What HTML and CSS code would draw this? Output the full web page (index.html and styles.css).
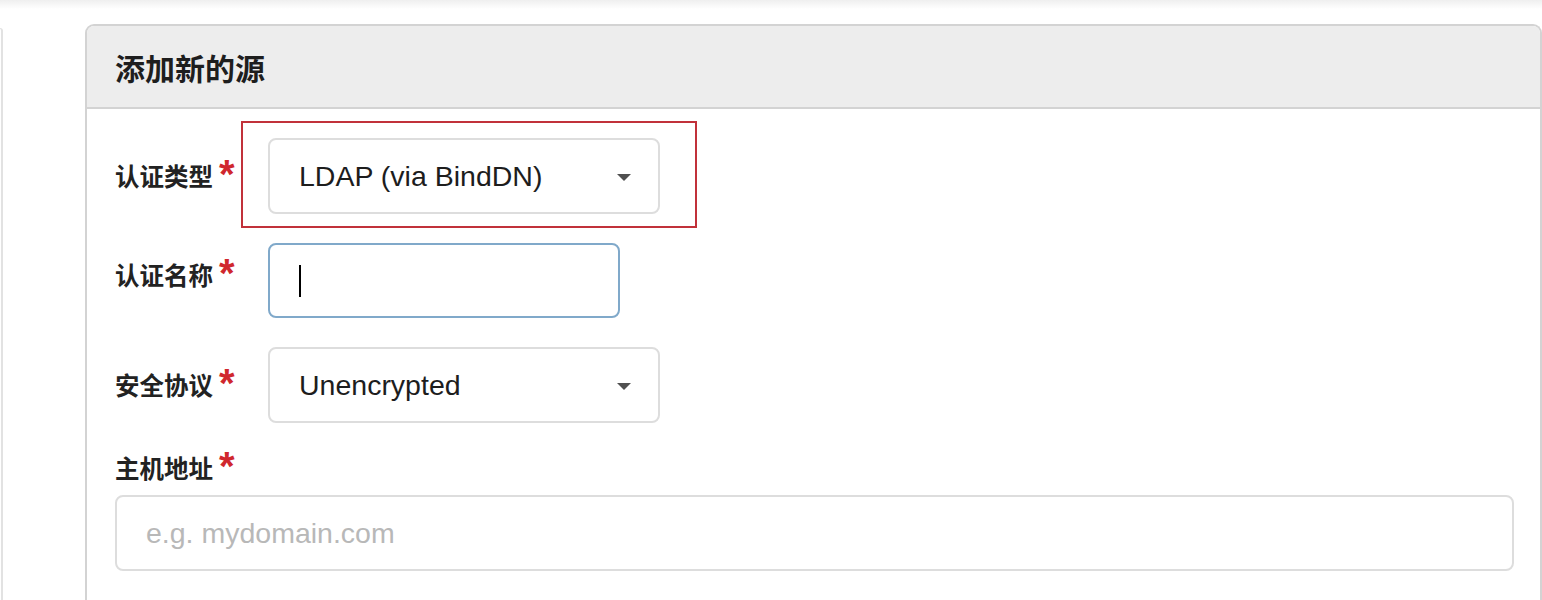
FILE: index.html
```html
<!DOCTYPE html>
<html lang="zh-CN">
<head>
<meta charset="utf-8">
<title>添加新的源</title>
<link rel="stylesheet" href="styles.css">
</head>
<body>
<div class="topshade"></div>
<div class="page">
  <div class="sidestub"></div>
  <section class="panel">
    <header class="panel-head">
      <h2 class="panel-title">添加新的源</h2>
    </header>
    <div class="panel-body">
      <div class="row">
        <label class="label">认证类型<span class="req">*</span></label>
        <div class="field select highlight">
          <span class="value">LDAP (via BindDN)</span>
          <span class="caret"></span>
        </div>
      </div>
      <div class="row">
        <label class="label label-up">认证名称<span class="req">*</span></label>
        <div class="field input focused">
          <span class="cursor"></span>
        </div>
      </div>
      <div class="row">
        <label class="label">安全协议<span class="req">*</span></label>
        <div class="field select">
          <span class="value">Unencrypted</span>
          <span class="caret"></span>
        </div>
      </div>
      <div class="stack">
        <label class="label">主机地址<span class="req">*</span></label>
        <div class="field input wide">
          <span class="placeholder">e.g. mydomain.com</span>
        </div>
      </div>
    </div>
  </section>
</div>
</body>
</html>
```

FILE: styles.css
```css
html, body {
  margin: 0;
  padding: 0;
  background: #ffffff;
  overflow: hidden;
}
body {
  width: 1542px;
  height: 600px;
  font-family: "Liberation Sans", "Noto Sans CJK SC", sans-serif;
  color: #222;
}
.topshade {
  height: 9px;
  background: linear-gradient(#efefef, #ffffff);
}
.page {
  display: flex;
  align-items: flex-start;
}
.sidestub {
  width: 1px;
  height: 600px;
  margin-top: 19px;
  border-top: 1px solid #e2e2e2;
  border-right: 2px solid #e2e2e2;
  border-top-right-radius: 6px;
  flex: none;
}
.panel {
  flex: 1;
  margin-left: 82px;
  margin-top: 15px;
  border: 2px solid #d3d3d3;
  border-bottom: none;
  border-radius: 9px 9px 0 0;
  height: 600px;
  background: #fff;
}
.panel-head {
  height: 81px;
  background: #ededed;
  border-bottom: 2px solid #d3d3d3;
  border-radius: 7px 7px 0 0;
  display: flex;
  align-items: center;
  padding-left: 28px;
}
.panel-title {
  margin: 0;
  font-family: "Noto Sans CJK SC", sans-serif;
  font-size: 30px;
  font-weight: 700;
  color: #1e1e1e;
}
.panel-body {
  padding: 0 26px 0 28px;
}
.row {
  display: flex;
  align-items: center;
  margin-top: 29px;
}
.row .label {
  width: 153px;
  flex: none;
}
.label {
  font-family: "Noto Sans CJK SC", sans-serif;
  font-size: 24.5px;
  font-weight: 700;
  line-height: 34px;
  color: #222;
  display: block;
}
.label-up {
  margin-bottom: 11px;
}
.req {
  font-family: "Liberation Sans", sans-serif;
  color: #d0272e;
  font-size: 40px;
  font-weight: 700;
  line-height: 0;
  margin-left: 6px;
  position: relative;
  top: 2px;
}
.field {
  box-sizing: border-box;
  height: 76px;
  border: 2px solid #dddddd;
  border-radius: 8px;
  background: #fff;
  display: flex;
  align-items: center;
  padding-left: 29px;
  position: relative;
}
.select {
  width: 392px;
}
.input {
  width: 352px;
}
.focused {
  border-color: #80a9ca;
  height: 75px;
}
.wide {
  width: auto;
  flex: 1;
}
.value {
  font-size: 28.5px;
  color: #1d1d1d;
}
.caret {
  position: absolute;
  right: 27px;
  top: 34px;
  width: 0;
  height: 0;
  border-left: 7px solid transparent;
  border-right: 7px solid transparent;
  border-top: 7px solid #505050;
}
.cursor {
  display: block;
  width: 2px;
  height: 32px;
  background: #000;
}
.highlight::after {
  content: "";
  position: absolute;
  top: -19px;
  left: -29px;
  right: -39px;
  bottom: -16px;
  border: 2px solid #c1313a;
  pointer-events: none;
}
.stack {
  margin-top: 28px;
}
.stack .label {
  margin-bottom: 10px;
}
.placeholder {
  font-size: 28.5px;
  color: #b8b8b8;
}
```
